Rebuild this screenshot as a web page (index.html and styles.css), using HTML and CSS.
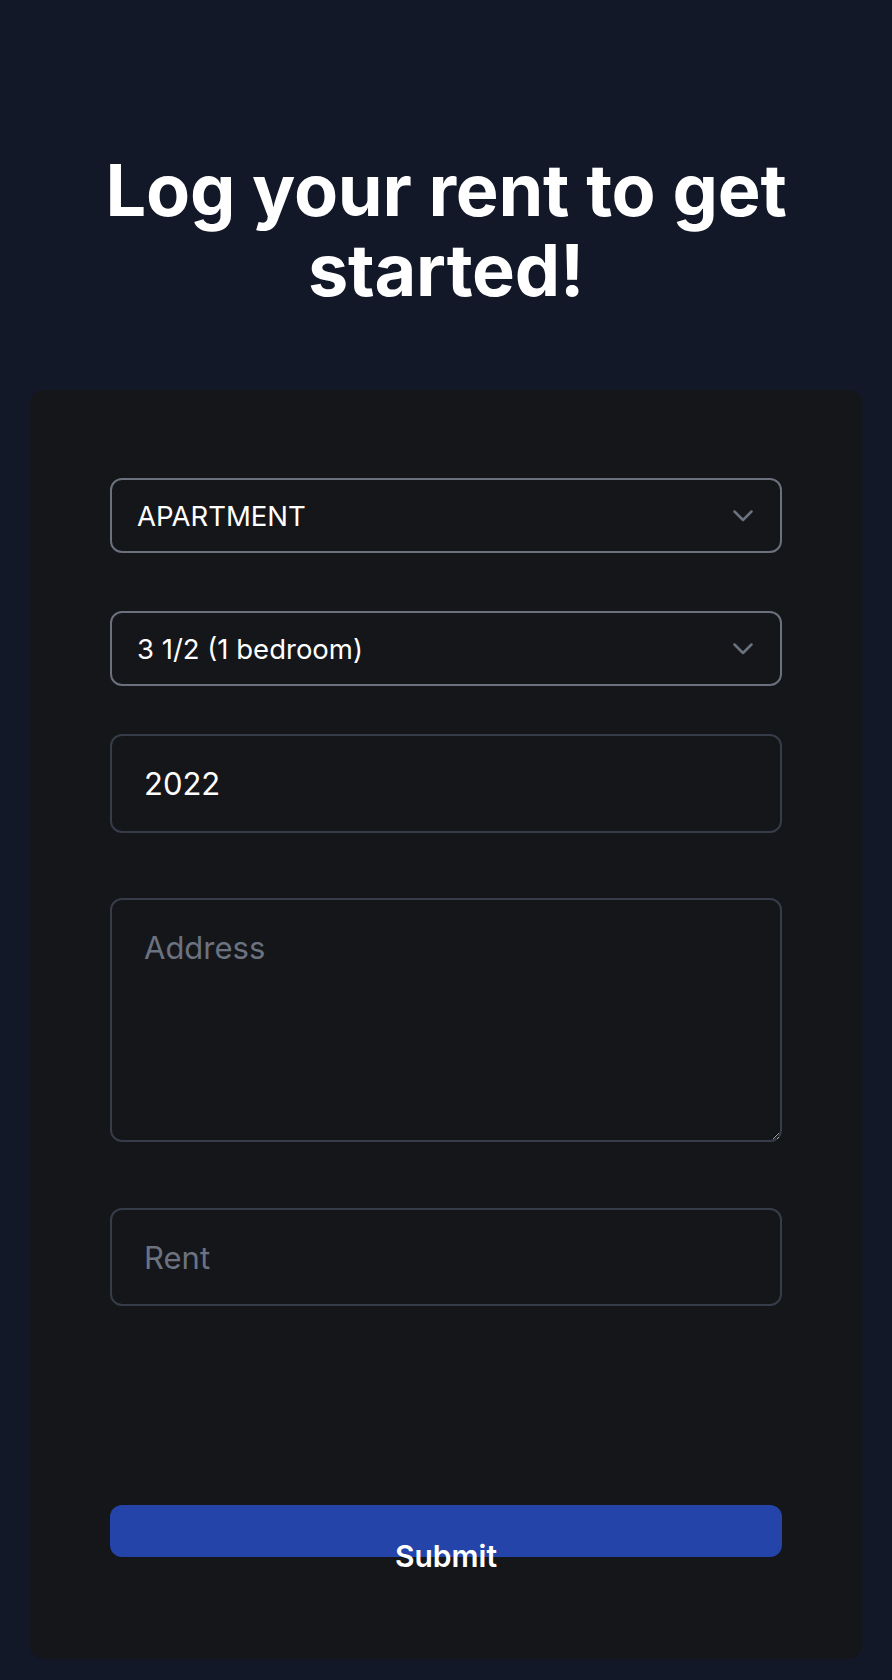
FILE: index.html
```html
<!DOCTYPE html>
<html lang="en">
<head>
<meta charset="utf-8">
<title>Log your rent</title>
<link rel="stylesheet" href="styles.css">
</head>
<body>
<main class="page">
  <h1 class="title">Log your rent to get started!</h1>
  <section class="card">
    <form class="form">
      <div class="select-wrap">
        <select class="select">
          <option>APARTMENT</option>
          <option>HOUSE</option>
        </select>
        <svg class="chevron" width="20" height="12" viewBox="0 0 20 12" aria-hidden="true"><polyline points="1.5,1.5 10,10 18.5,1.5" fill="none" stroke="#6b7280" stroke-width="2.5" stroke-linecap="round" stroke-linejoin="round"/></svg>
      </div>
      <div class="select-wrap second">
        <select class="select">
          <option>3 1/2 (1 bedroom)</option>
          <option>4 1/2 (2 bedrooms)</option>
        </select>
        <svg class="chevron" width="20" height="12" viewBox="0 0 20 12" aria-hidden="true"><polyline points="1.5,1.5 10,10 18.5,1.5" fill="none" stroke="#6b7280" stroke-width="2.5" stroke-linecap="round" stroke-linejoin="round"/></svg>
      </div>
      <input class="field year" type="text" value="2022">
      <textarea class="field address" placeholder="Address"></textarea>
      <input class="field rent" type="text" placeholder="Rent">
      <button class="submit" type="button"><span class="submit-label">Submit</span></button>
    </form>
  </section>
</main>
</body>
</html>
```

FILE: styles.css
```css
* { box-sizing: border-box; }

html, body {
  margin: 0;
  padding: 0;
  background: #121827;
}

body {
  font-family: Inter, "Noto Sans", "Liberation Sans", sans-serif;
  color: #ffffff;
}

.page {
  padding: 150px 30px 20px;
}

.title {
  margin: 0 auto;
  max-width: 720px;
  text-align: center;
  font-size: 72px;
  line-height: 80px;
  font-weight: 700;
  letter-spacing: -0.2px;
  color: #ffffff;
}

.card {
  margin-top: 80px;
  background: #151619;
  border-radius: 14px;
  padding: 88px 80px 102px;
}

.form {
  display: flex;
  flex-direction: column;
}

.select-wrap {
  position: relative;
}

.select-wrap.second {
  margin-top: 58px;
}

.select {
  display: block;
  width: 100%;
  height: 75px;
  appearance: none;
  -webkit-appearance: none;
  background: #151619;
  border: 2px solid #6a707c;
  border-radius: 12px;
  padding: 0 60px 0 25px;
  font-family: Inter, "Noto Sans", "Liberation Sans", sans-serif;
  font-size: 27.5px;
  color: #ffffff;
  outline: none;
}

.chevron {
  position: absolute;
  right: 29px;
  top: 32px;
  pointer-events: none;
}

.field {
  display: block;
  width: 100%;
  background: #151619;
  border: 2px solid #363c49;
  border-radius: 12px;
  padding: 29px 32px;
  font-family: Inter, "Noto Sans", "Liberation Sans", sans-serif;
  font-size: 31px;
  line-height: 37px;
  color: #ffffff;
  outline: none;
}

.field::placeholder {
  color: #6b7280;
}

.year {
  margin-top: 48px;
  height: 99px;
}

.address {
  margin-top: 65px;
  height: 244px;
  resize: vertical;
}

.rent {
  margin-top: 66px;
  height: 98px;
}

.submit {
  margin-top: 199px;
  display: flex;
  align-items: flex-start;
  justify-content: center;
  width: 100%;
  height: 52px;
  padding: 0;
  border: none;
  border-radius: 12px;
  background: #2444a9;
  color: #ffffff;
  overflow: visible;
  cursor: pointer;
}

.submit-label {
  display: block;
  padding-top: 33px;
  font-family: Inter, "Noto Sans", "Liberation Sans", sans-serif;
  font-size: 30px;
  line-height: 36px;
  font-weight: 600;
}
```
